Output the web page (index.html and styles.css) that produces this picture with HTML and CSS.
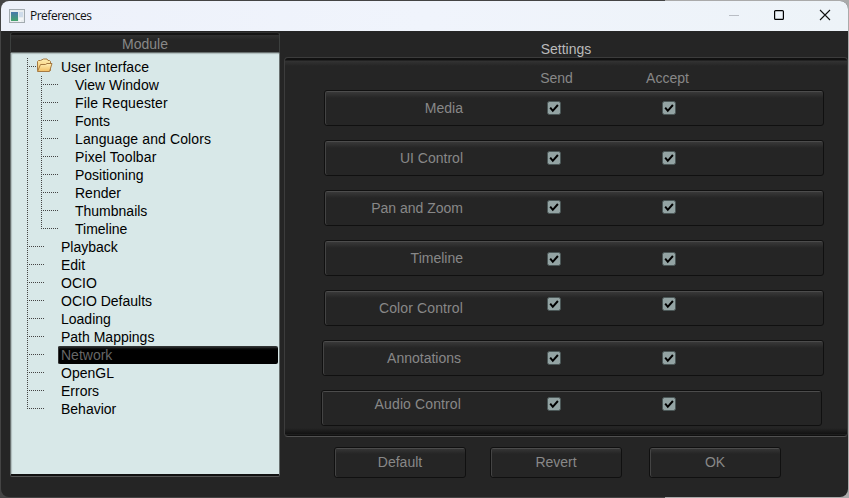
FILE: index.html
```html
<!DOCTYPE html>
<html lang="en">
<head>
<meta charset="utf-8">
<title>Preferences</title>
<link rel="stylesheet" href="styles.css">
</head>
<body>
<svg width="0" height="0" class="defs" aria-hidden="true">
  <symbol id="check" viewBox="0 0 14 14"><rect x=".5" y=".5" width="13" height="13" rx="2" fill="#93a3a3" stroke="#4b5757"/><path d="M3.200 6.600 5.800 9.800 10.900 4" fill="none" stroke="#000" stroke-width="2"/></symbol>
</svg>
<div class="window">
  <header class="titlebar">
    <svg class="app-icon" width="16" height="14" viewBox="0 0 16 14"><defs><linearGradient id="g" x2="0" y2="1"><stop stop-color="#4a79ad"/><stop offset="1" stop-color="#45a46b"/></linearGradient></defs><rect x=".5" y=".5" width="15" height="13" fill="#e9edef" stroke="#a3abb0"/><rect x="2" y="3" width="7" height="9" fill="url(#g)"/><rect x="10" y="3" width="4" height="5" fill="#cfdcea"/><path d="M10 10h4M10 12h2" stroke="#fff"/></svg>
    <span class="title">Preferences</span>
    <svg class="controls" width="104" height="12" viewBox="0 0 104 12" fill="none"><path d="M1 6.500h10" stroke="#b9bdc4"/><rect x="46.600" y="1.600" width="8.800" height="8.800" rx="1" stroke="#000" stroke-width="1.200"/><path d="m92 1 10 10M102 1 92 11" stroke="#111" stroke-width="1.100"/></svg>
  </header>
  <div class="content">
    <aside class="sidebar">
      <div class="module-head">Module</div>
      <div class="list">
        <ul class="tree">
          <li class="folder"><svg width="17" height="15" viewBox="0 0 17 15"><defs><linearGradient id="f" x2="0" y2="1"><stop stop-color="#fff0b5"/><stop offset="1" stop-color="#f2bd62"/></linearGradient></defs><path d="M1.500 12.500v-9l1-1h2l3-1.500h3.500l1 1.500h1.500l1 1v9z" fill="url(#f)" stroke="#a67a42"/><path d="M1.500 13.500 4.500 6.500h5l1.500-1h5l-2.500 8z" fill="url(#f)" stroke="#a67a42"/></svg><span>User Interface</span></li>
          <li class="branch"><ul class="subtree">
            <li>View Window</li><li class="wide">File Requester</li><li>Fonts</li><li class="wide">Language and Colors</li><li class="wide">Pixel Toolbar</li><li>Positioning</li><li>Render</li><li>Thumbnails</li><li>Timeline</li>
          </ul></li>
          <li class="item">Playback</li><li class="item">Edit</li><li class="item">OCIO</li><li class="item">OCIO Defaults</li><li class="item">Loading</li><li class="item">Path Mappings</li>
          <li class="item selected"><span>Network</span></li>
          <li class="item">OpenGL</li><li class="item">Errors</li><li class="item">Behavior</li>
        </ul>
      </div>
    </aside>
    <main class="main">
      <h1>Settings</h1>
      <section class="panel">
        <div class="columns"><span>Send</span><span>Accept</span></div>
        <div class="row"><span>Media</span><svg><use href="#check"/></svg><svg><use href="#check"/></svg></div>
        <div class="row"><span>UI Control</span><svg><use href="#check"/></svg><svg><use href="#check"/></svg></div>
        <div class="row up"><span>Pan and Zoom</span><svg><use href="#check"/></svg><svg><use href="#check"/></svg></div>
        <div class="row down"><span>Timeline</span><svg><use href="#check"/></svg><svg><use href="#check"/></svg></div>
        <div class="row high"><span class="wide">Color Control</span><svg><use href="#check"/></svg><svg><use href="#check"/></svg></div>
        <div class="row annotations"><span>Annotations</span><svg><use href="#check"/></svg><svg><use href="#check"/></svg></div>
        <div class="row audio"><span class="wide">Audio Control</span><svg><use href="#check"/></svg><svg><use href="#check"/></svg></div>
      </section>
      <footer class="actions"><button>Default</button><button>Revert</button><button>OK</button></footer>
    </main>
  </div>
</div>
</body>
</html>
```
FILE: styles.css
```css
* { box-sizing: border-box; }
body {
  margin: 0;
  height: 498px;
  padding: 1px;
  overflow: hidden;
  background: linear-gradient(90deg, #444 0 665px, #aaa 665px);
  font: 14px/18px "Liberation Sans", Arial, sans-serif;
  color: #888;
}
ul { list-style: none; margin: 0; padding: 0; }
.defs { display: block; }
.wide { letter-spacing: .12px; }
.window { height: 496px; border-radius: 8px; overflow: hidden; background: #252525; }
.titlebar {
  display: flex;
  align-items: center;
  height: 30px;
  padding: 0 16px 0 8px;
  background: linear-gradient(90deg, #edf1fa, #f0f4fc 50%, #edf3f8);
  color: #111;
}
.title { margin-left: 5px; font: 12px/16px "Open Sans", sans-serif; letter-spacing: -.5px; }
.controls { margin: 0 0 2px auto; }
.content { display: flex; height: 466px; }
.sidebar { width: 270px; margin: 1px 0 0 9px; }
.module-head {
  height: 20px;
  padding-top: 2px;
  border: 1px solid #3c3f3e;
  border-top-color: #303030;
  border-bottom: 0;
  border-radius: 3px 3px 0 0;
  background: linear-gradient(#151515 0 2px, #303030 2px, #252525 7px);
  text-align: center;
}
.list {
  height: 424px;
  padding: 5px 1px 0 0;
  border: 1px solid #68706f;
  border-bottom: 2px solid #111;
  border-radius: 2px;
  background: #d8e8e8;
  box-shadow: inset 1px 1px 1px #aebbbb, 0 1px #555;
  color: #000;
}
.tree {
  background: repeating-linear-gradient(#444 0 1px, transparent 1px 2px) 16px 0 / 1px 351px no-repeat;
}
.item, .folder {
  display: flex;
  height: 18px;
  padding-left: 50px;
  background: repeating-linear-gradient(90deg, #444 0 1px, transparent 1px 2px) 16px 8px / 18px 1px no-repeat;
}
.folder { padding-left: 25px; }
.folder svg { margin-right: 8px; }
.subtree { background: repeating-linear-gradient(#444 0 1px, transparent 1px 2px) 30px 0 / 1px 153px no-repeat; }
.subtree li {
  height: 18px;
  padding-left: 64px;
  background: repeating-linear-gradient(90deg, #444 0 1px, transparent 1px 2px) 30px 8px / 18px 1px no-repeat;
}
.selected { padding-left: 47px; }
.selected span {
  flex: 1;
  padding-left: 3px;
  border-radius: 2px;
  background: linear-gradient(#303333 0 1px, #151616 2px, #000 4px);
  box-shadow: inset 1px 0 #333;
  color: #666;
}
.main { width: 564px; margin-left: 4px; }
h1 { margin: 0; padding-top: 9px; height: 26px; font: inherit; color: #bbb; text-align: center; }
.panel {
  height: 380px;
  padding: 9px 0 0 39px;
  border: 1px solid #3c3c3c;
  border-bottom-color: #505050;
  border-radius: 4px;
  background: linear-gradient(#111 0 2px, #333 3px, #252525 8px 370px, #121212 376px, #1d1d1d 376px 377px, #101010 377px);
}
.columns { display: grid; grid-template-columns: 115px 107px; padding-left: 175px; height: 23px; }
.columns span { padding-top: 2px; text-align: center; }
.row {
  display: grid;
  grid-template-columns: 138px 98px 115px;
  align-items: center;
  width: 500px;
  height: 36px;
  margin-bottom: 14px;
  border: 1px solid #101010;
  border-radius: 3px;
  background: linear-gradient(#4c4c4c 0 1px, #383838 1px, #252525 7px);
  box-shadow: inset 1px 0 #444;
}
.row span { text-align: right; }
.row svg { width: 14px; height: 14px; justify-self: end; }
.up svg { margin-bottom: 2px; }
.down svg { margin-top: 2px; }
.high svg { margin-bottom: 8px; }
.annotations { margin-left: -2px; width: 502px; grid-template-columns: 138px 100px 115px; }
.audio {
  margin-left: -3px;
  width: 501px;
  grid-template-columns: 139px 100px 115px;
  padding-bottom: 8px;
  background: linear-gradient(#4c4c4c 0 1px, #252525 1px);
}
.actions { display: flex; padding: 10px 0 0 50px; }
button {
  width: 132px;
  height: 31px;
  margin-right: 24px;
  padding: 0 0 2px;
  border: 1px solid #101010;
  border-radius: 3px;
  background: linear-gradient(#4c4c4c 0 1px, #353535 1px, #252525 6px);
  box-shadow: inset 1px 0 #444;
  font: inherit;
  color: #888;
}
button:last-child { margin-left: 3px; }
```
